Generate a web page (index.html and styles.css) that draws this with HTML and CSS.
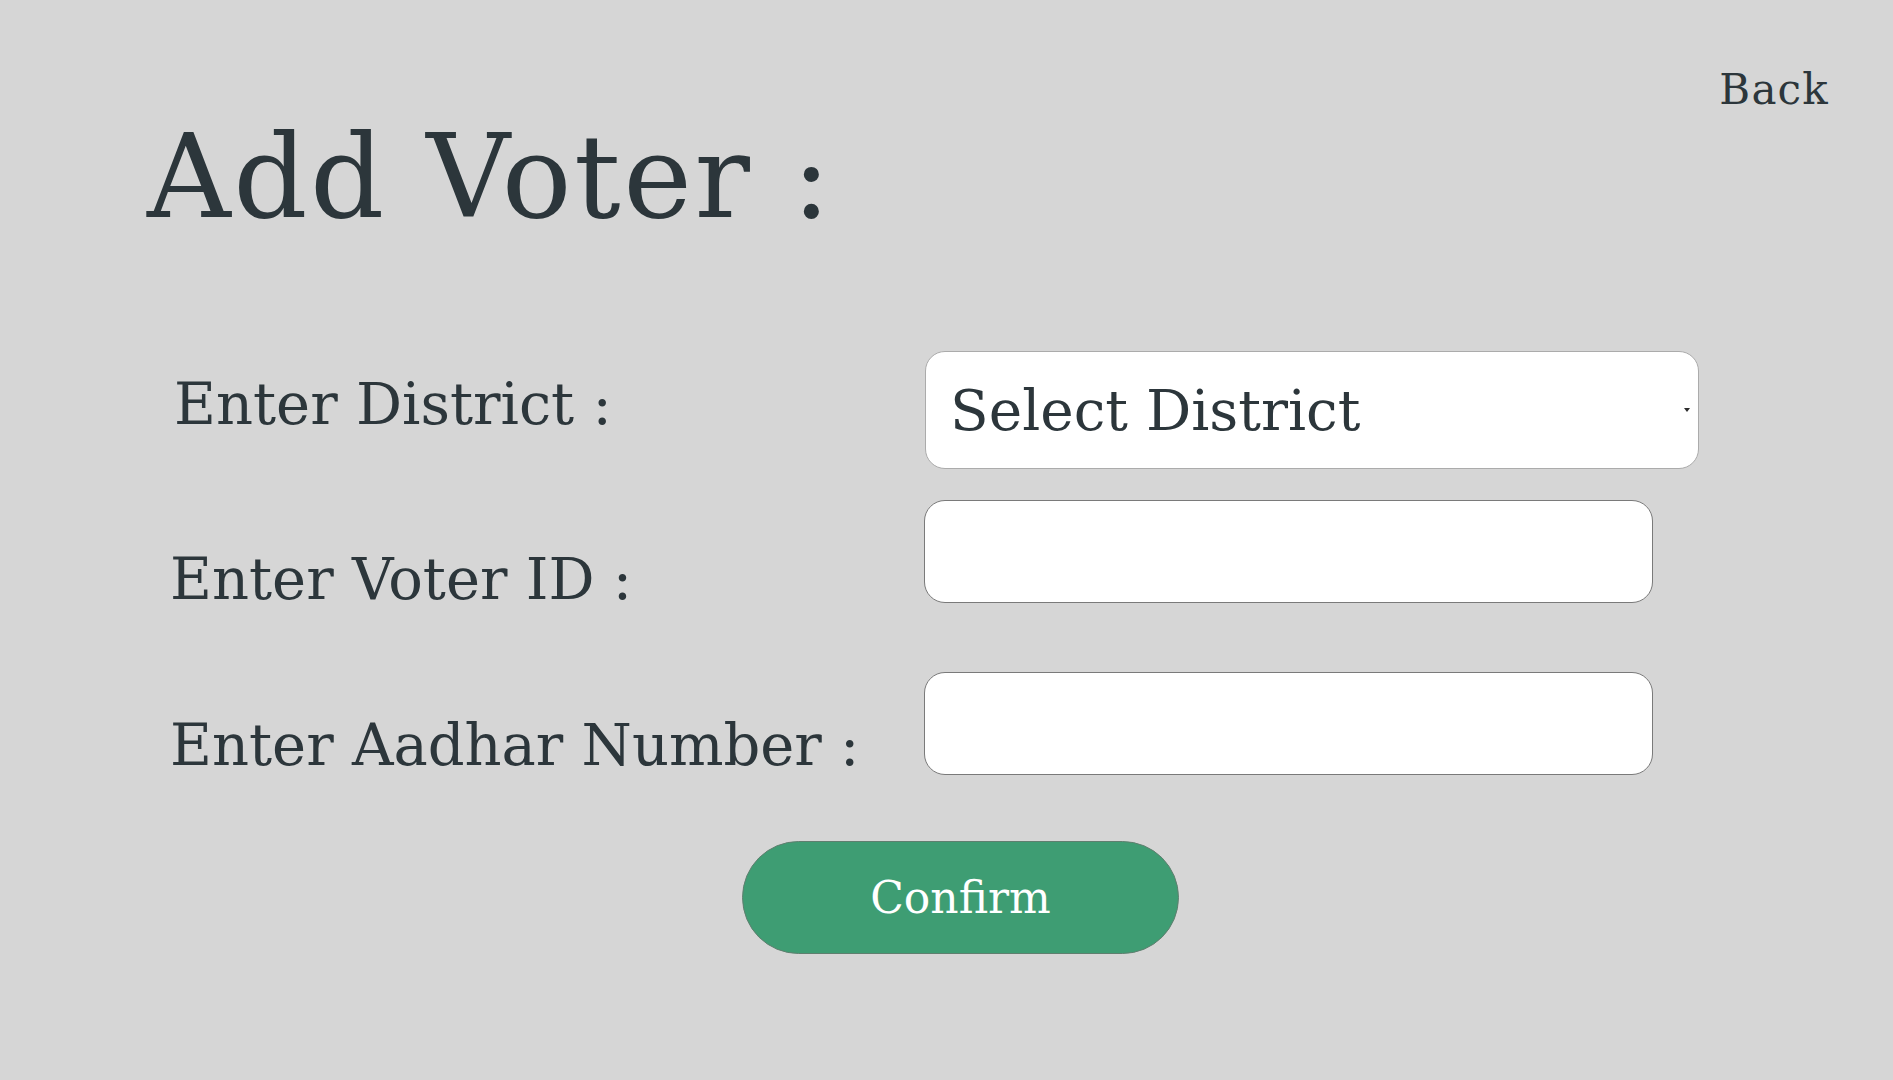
FILE: index.html
```html
<!DOCTYPE html>
<html lang="en">
<head>
<meta charset="utf-8">
<title>Add Voter</title>
<link rel="stylesheet" href="styles.css">
</head>
<body>
<div class="page">
  <header class="header">
    <h1 class="title">Add Voter :</h1>
    <a class="back" href="#">Back</a>
  </header>
  <form class="form">
    <div class="row row-district">
      <label class="label">Enter District :</label>
      <div class="select-wrap">
        <select class="select">
          <option>Select District</option>
        </select>
      </div>
    </div>
    <div class="row row-voter">
      <label class="label">Enter Voter ID :</label>
      <input class="input" type="text">
    </div>
    <div class="row row-aadhar">
      <label class="label">Enter Aadhar Number :</label>
      <input class="input" type="text">
    </div>
    <div class="actions">
      <button class="confirm" type="button">Confirm</button>
    </div>
  </form>
</div>
</body>
</html>
```

FILE: styles.css
```css
html, body {
  margin: 0;
  padding: 0;
  background: #d6d6d6;
}

body {
  font-family: "DejaVu Serif", serif;
  color: #2c363b;
  width: 1893px;
  height: 1080px;
  overflow: hidden;
}

.header {
  display: flex;
  justify-content: space-between;
  align-items: flex-start;
  padding: 0 64px 0 147px;
}

.title {
  margin: 119px 0 0 0;
  font-size: 116px;
  font-weight: normal;
  line-height: 1;
  letter-spacing: 2.5px;
}

.back {
  margin-top: 69px;
  font-size: 42px;
  line-height: 1;
  letter-spacing: 1.2px;
  color: #2c363b;
  text-decoration: none;
}

.form {
  margin-top: 116px;
  padding-left: 174px;
}

.row {
  display: grid;
  grid-template-columns: 751px auto;
  align-items: start;
}

.label {
  font-size: 57.5px;
  line-height: 1;
}

.row-district .label { margin-top: 25px; }
.row-voter { margin-top: 31px; }
.row-voter .label { margin-top: 51px; margin-left: -4px; }
.row-aadhar { margin-top: 63px; }
.row-aadhar .label { margin-top: 45px; margin-left: -4px; }

.select-wrap {
  position: relative;
  width: 774px;
}

.select-wrap::after {
  content: "";
  position: absolute;
  right: 9px;
  top: 57px;
  border-left: 3px solid transparent;
  border-right: 3px solid transparent;
  border-top: 4px solid #2c2c2c;
}

.select {
  -webkit-appearance: none;
  appearance: none;
  box-sizing: border-box;
  width: 774px;
  height: 118px;
  margin: 0;
  padding: 0 0 0 24px;
  background: #ffffff;
  border: 1px solid #ababab;
  border-radius: 20px;
  font-family: "DejaVu Serif", serif;
  font-size: 56.5px;
  color: #2c363b;
  outline: none;
}

.input {
  box-sizing: border-box;
  width: 729px;
  height: 103px;
  margin: 0 0 0 -1px;
  padding: 0 20px;
  background: #ffffff;
  border: 1px solid #7a7a7a;
  border-radius: 21px;
  font-family: "DejaVu Serif", serif;
  font-size: 40px;
  outline: none;
}

.actions {
  display: flex;
  margin-top: 66px;
  padding-left: 568px;
}

.confirm {
  box-sizing: border-box;
  width: 437px;
  height: 113px;
  background: #3e9d73;
  border: 1px solid #5f7f6f;
  border-radius: 57px;
  color: #ffffff;
  font-family: "DejaVu Serif", serif;
  font-size: 44px;
  padding: 0;
  cursor: pointer;
}
```
